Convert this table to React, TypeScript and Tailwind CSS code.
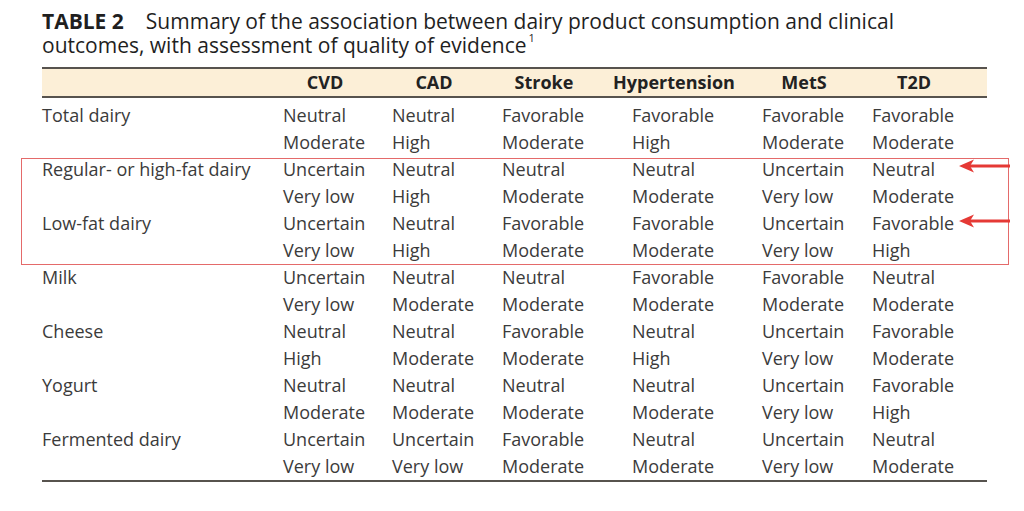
import React from "react";

const columns = ["CVD", "CAD", "Stroke", "Hypertension", "MetS", "T2D"];

// each cell: [association, quality of evidence]
const rows: { name: string; cells: [string, string][] }[] = [
  {
    name: "Total dairy",
    cells: [["Neutral", "Moderate"], ["Neutral", "High"], ["Favorable", "Moderate"], ["Favorable", "High"], ["Favorable", "Moderate"], ["Favorable", "Moderate"]],
  },
  {
    name: "Regular- or high-fat dairy",
    cells: [["Uncertain", "Very low"], ["Neutral", "High"], ["Neutral", "Moderate"], ["Neutral", "Moderate"], ["Uncertain", "Very low"], ["Neutral", "Moderate"]],
  },
  {
    name: "Low-fat dairy",
    cells: [["Uncertain", "Very low"], ["Neutral", "High"], ["Favorable", "Moderate"], ["Favorable", "Moderate"], ["Uncertain", "Very low"], ["Favorable", "High"]],
  },
  {
    name: "Milk",
    cells: [["Uncertain", "Very low"], ["Neutral", "Moderate"], ["Neutral", "Moderate"], ["Favorable", "Moderate"], ["Favorable", "Moderate"], ["Neutral", "Moderate"]],
  },
  {
    name: "Cheese",
    cells: [["Neutral", "High"], ["Neutral", "Moderate"], ["Favorable", "Moderate"], ["Neutral", "High"], ["Uncertain", "Very low"], ["Favorable", "Moderate"]],
  },
  {
    name: "Yogurt",
    cells: [["Neutral", "Moderate"], ["Neutral", "Moderate"], ["Neutral", "Moderate"], ["Neutral", "Moderate"], ["Uncertain", "Very low"], ["Favorable", "High"]],
  },
  {
    name: "Fermented dairy",
    cells: [["Uncertain", "Very low"], ["Uncertain", "Very low"], ["Favorable", "Moderate"], ["Neutral", "Moderate"], ["Uncertain", "Very low"], ["Neutral", "Moderate"]],
  },
];

const grid = "grid grid-cols-[241px_109px_110px_130px_130px_110px_115px]";

const Arrow = ({ top }: { top: string }) => (
  <svg className={`absolute left-[957px] ${top}`} width="53" height="16" viewBox="0 0 53 16">
    <line x1="53" y1="8" x2="12" y2="8" stroke="#e53935" strokeWidth="3" />
    <path d="M2 8 L17 1.5 L13 8 L17 14.5 Z" fill="#e53935" />
  </svg>
);

const App: React.FC = () => {
  return (
    <div className="relative w-[1024px] h-[511px] bg-white overflow-hidden font-['Open_Sans',sans-serif] text-[#3b3b3b]">
      <div className="pl-[42px] pt-[9px] w-[987px]">
        <div className="text-[21px] leading-[24px] text-[#1f1f1f]">
          <div>
            <span className="font-bold">TABLE 2</span>
            <span className="ml-[22px]">Summary of the association between dairy product consumption and clinical</span>
          </div>
          <div>
            outcomes, with assessment of quality of evidence
            <span className="inline-block align-top text-[11px] leading-[12px] ml-[2px] -mt-[1px]">1</span>
          </div>
        </div>

        <div className="mt-[10px] border-y-2 border-[#57534e] bg-[#fcefd7]">
          <div className={`${grid} h-[27px] items-center`}>
            <div />
            {columns.map((c) => (
              <div key={c} className="w-[84px] flex justify-center">
                <span className="whitespace-nowrap font-bold text-[18px] leading-[27px] text-[#222]">{c}</span>
              </div>
            ))}
          </div>
        </div>

        <div className="pt-[4px] border-b-2 border-[#57534e] text-[18px] leading-[27px]">
          {rows.map((r) => (
            <div key={r.name} className={grid}>
              <div className="whitespace-nowrap">{r.name}</div>
              {r.cells.map(([a, q], i) => (
                <div key={i} className="whitespace-nowrap">
                  <div>{a}</div>
                  <div>{q}</div>
                </div>
              ))}
            </div>
          ))}
        </div>
      </div>

      {/* annotation overlay */}
      <div className="absolute left-[21px] top-[158px] w-[988px] h-[107px] border-[1.5px] border-[#e46a6a]" />
      <Arrow top="top-[158px]" />
      <Arrow top="top-[213px]" />
    </div>
  );
};

export default App;
